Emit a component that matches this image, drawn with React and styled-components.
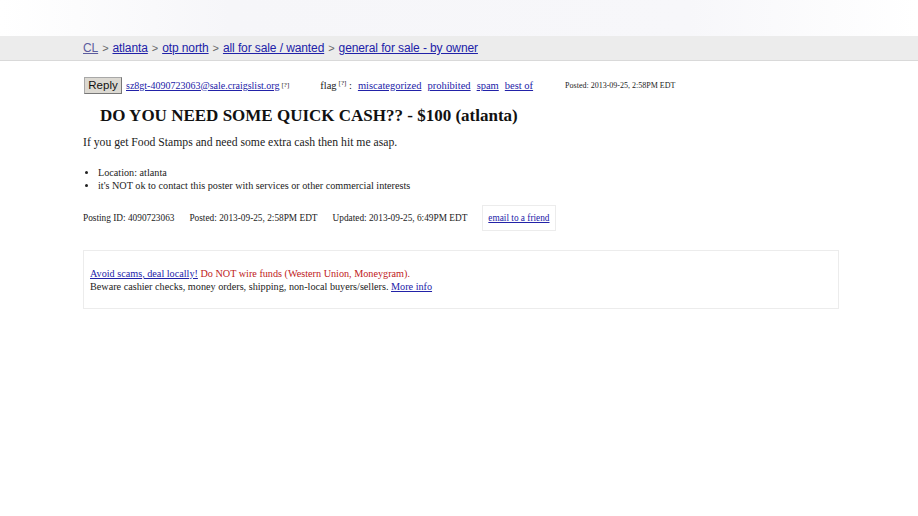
import React from "react";
import styled, { createGlobalStyle } from "styled-components";

const GlobalStyle = createGlobalStyle`
  body {
    margin: 0;
    background: #fff;
    font-family: "Liberation Serif", "Times New Roman", serif;
    color: #222;
  }
`;

const TopShade = styled.div`
  height: 36px;
  background: linear-gradient(90deg, #ffffff 0%, #f6f6f9 25%, #f7f7fa 75%, #ffffff 100%);
`;

const Crumbs = styled.nav`
  display: flex;
  align-items: center;
  height: 24px;
  padding-left: 83px;
  background: #ececec;
  border-bottom: 1px solid #d9d9d9;
  font-family: "Liberation Sans", Arial, sans-serif;
  font-size: 12px;
  letter-spacing: -0.1px;
  color: #666;
`;

const CrumbLink = styled.a`
  color: ${(p) => (p.$home ? "#5b5b9e" : "#2121a8")};
  text-decoration: underline;
`;

const Sep = styled.span`
  margin: 0 4px;
  font-size: 11px;
`;

const Page = styled.main`
  padding: 15px 80px 0 83px;
`;

const TopRow = styled.div`
  display: flex;
  align-items: center;
  height: 18px;
  font-size: 10px;
`;

const ReplyButton = styled.button`
  font-family: "Liberation Sans", Arial, sans-serif;
  font-size: 11.5px;
  color: #111;
  height: 17px;
  width: 38px;
  padding: 0;
  margin: 0 4px 0 1px;
  background: #dcd9d2;
  border: 1px solid #a8a8a8;
  border-right-color: #777;
  border-bottom-color: #777;
`;

const Link = styled.a`
  color: #2222a8;
  text-decoration: underline;
  font-size: ${(p) => p.$size || "inherit"};
  margin-right: ${(p) => p.$gap || 0}px;
`;

const Help = styled.sup`
  font-size: 7px;
  margin-left: 2px;
  vertical-align: 4px;
`;

const Flag = styled.span`
  margin-left: 31px;
  margin-right: 6px;
  font-size: 10.5px;
`;

const Stamp = styled.span`
  font-size: 8px;
  margin-left: 32px;
`;

const Title = styled.h2`
  margin: 12px 0 0 17px;
  font-size: 17px;
  font-weight: bold;
  color: #111;
`;

const Body = styled.p`
  margin: 10px 0 0;
  font-size: 11.7px;
`;

const Attrs = styled.ul`
  margin: 17px 0 0;
  padding-left: 15px;
  font-size: 10.2px;
  line-height: 13px;
`;

const InfoRow = styled.div`
  display: flex;
  align-items: center;
  margin-top: 13px;
  font-size: 9.3px;
`;

const Info = styled.span`
  margin-right: 15px;
`;

const FriendBox = styled.div`
  display: flex;
  align-items: center;
  height: 24px;
  padding: 0 5px;
  border: 1px solid #ececec;
`;

const ScamBox = styled.div`
  margin-top: 19px;
  width: 742px;
  padding: 16px 6px 15px;
  border: 1px solid #ececec;
  font-size: 10.2px;
  line-height: 13px;
`;

const Warn = styled.span`
  color: #c02020;
`;

export default function App() {
  return (
    <>
      <GlobalStyle />
      <TopShade />
      <Crumbs>
        <CrumbLink $home href="#">CL</CrumbLink>
        <Sep>&gt;</Sep>
        <CrumbLink href="#">atlanta</CrumbLink>
        <Sep>&gt;</Sep>
        <CrumbLink href="#">otp north</CrumbLink>
        <Sep>&gt;</Sep>
        <CrumbLink href="#">all for sale / wanted</CrumbLink>
        <Sep>&gt;</Sep>
        <CrumbLink href="#">general for sale - by owner</CrumbLink>
      </Crumbs>
      <Page>
        <TopRow>
          <ReplyButton>Reply</ReplyButton>
          <Link href="#">sz8gt-4090723063@sale.craigslist.org</Link>
          <Help>[?]</Help>
          <Flag>
            flag<Help>[?]</Help> :
          </Flag>
          <Link href="#" $size="10.5px" $gap={6}>miscategorized</Link>
          <Link href="#" $size="10.5px" $gap={6}>prohibited</Link>
          <Link href="#" $size="10.5px" $gap={6}>spam</Link>
          <Link href="#" $size="10.5px">best of</Link>
          <Stamp>Posted: 2013-09-25, 2:58PM EDT</Stamp>
        </TopRow>
        <Title>DO YOU NEED SOME QUICK CASH?? - $100 (atlanta)</Title>
        <Body>If you get Food Stamps and need some extra cash then hit me asap.</Body>
        <Attrs>
          <li>Location: atlanta</li>
          <li>it's NOT ok to contact this poster with services or other commercial interests</li>
        </Attrs>
        <InfoRow>
          <Info>Posting ID: 4090723063</Info>
          <Info>Posted: 2013-09-25, 2:58PM EDT</Info>
          <Info>Updated: 2013-09-25, 6:49PM EDT</Info>
          <FriendBox>
            <Link href="#">email to a friend</Link>
          </FriendBox>
        </InfoRow>
        <ScamBox>
          <Link href="#">Avoid scams, deal locally!</Link>{" "}
          <Warn>Do NOT wire funds (Western Union, Moneygram).</Warn>
          <br />
          Beware cashier checks, money orders, shipping, non-local buyers/sellers.{" "}
          <Link href="#">More info</Link>
        </ScamBox>
      </Page>
    </>
  );
}
